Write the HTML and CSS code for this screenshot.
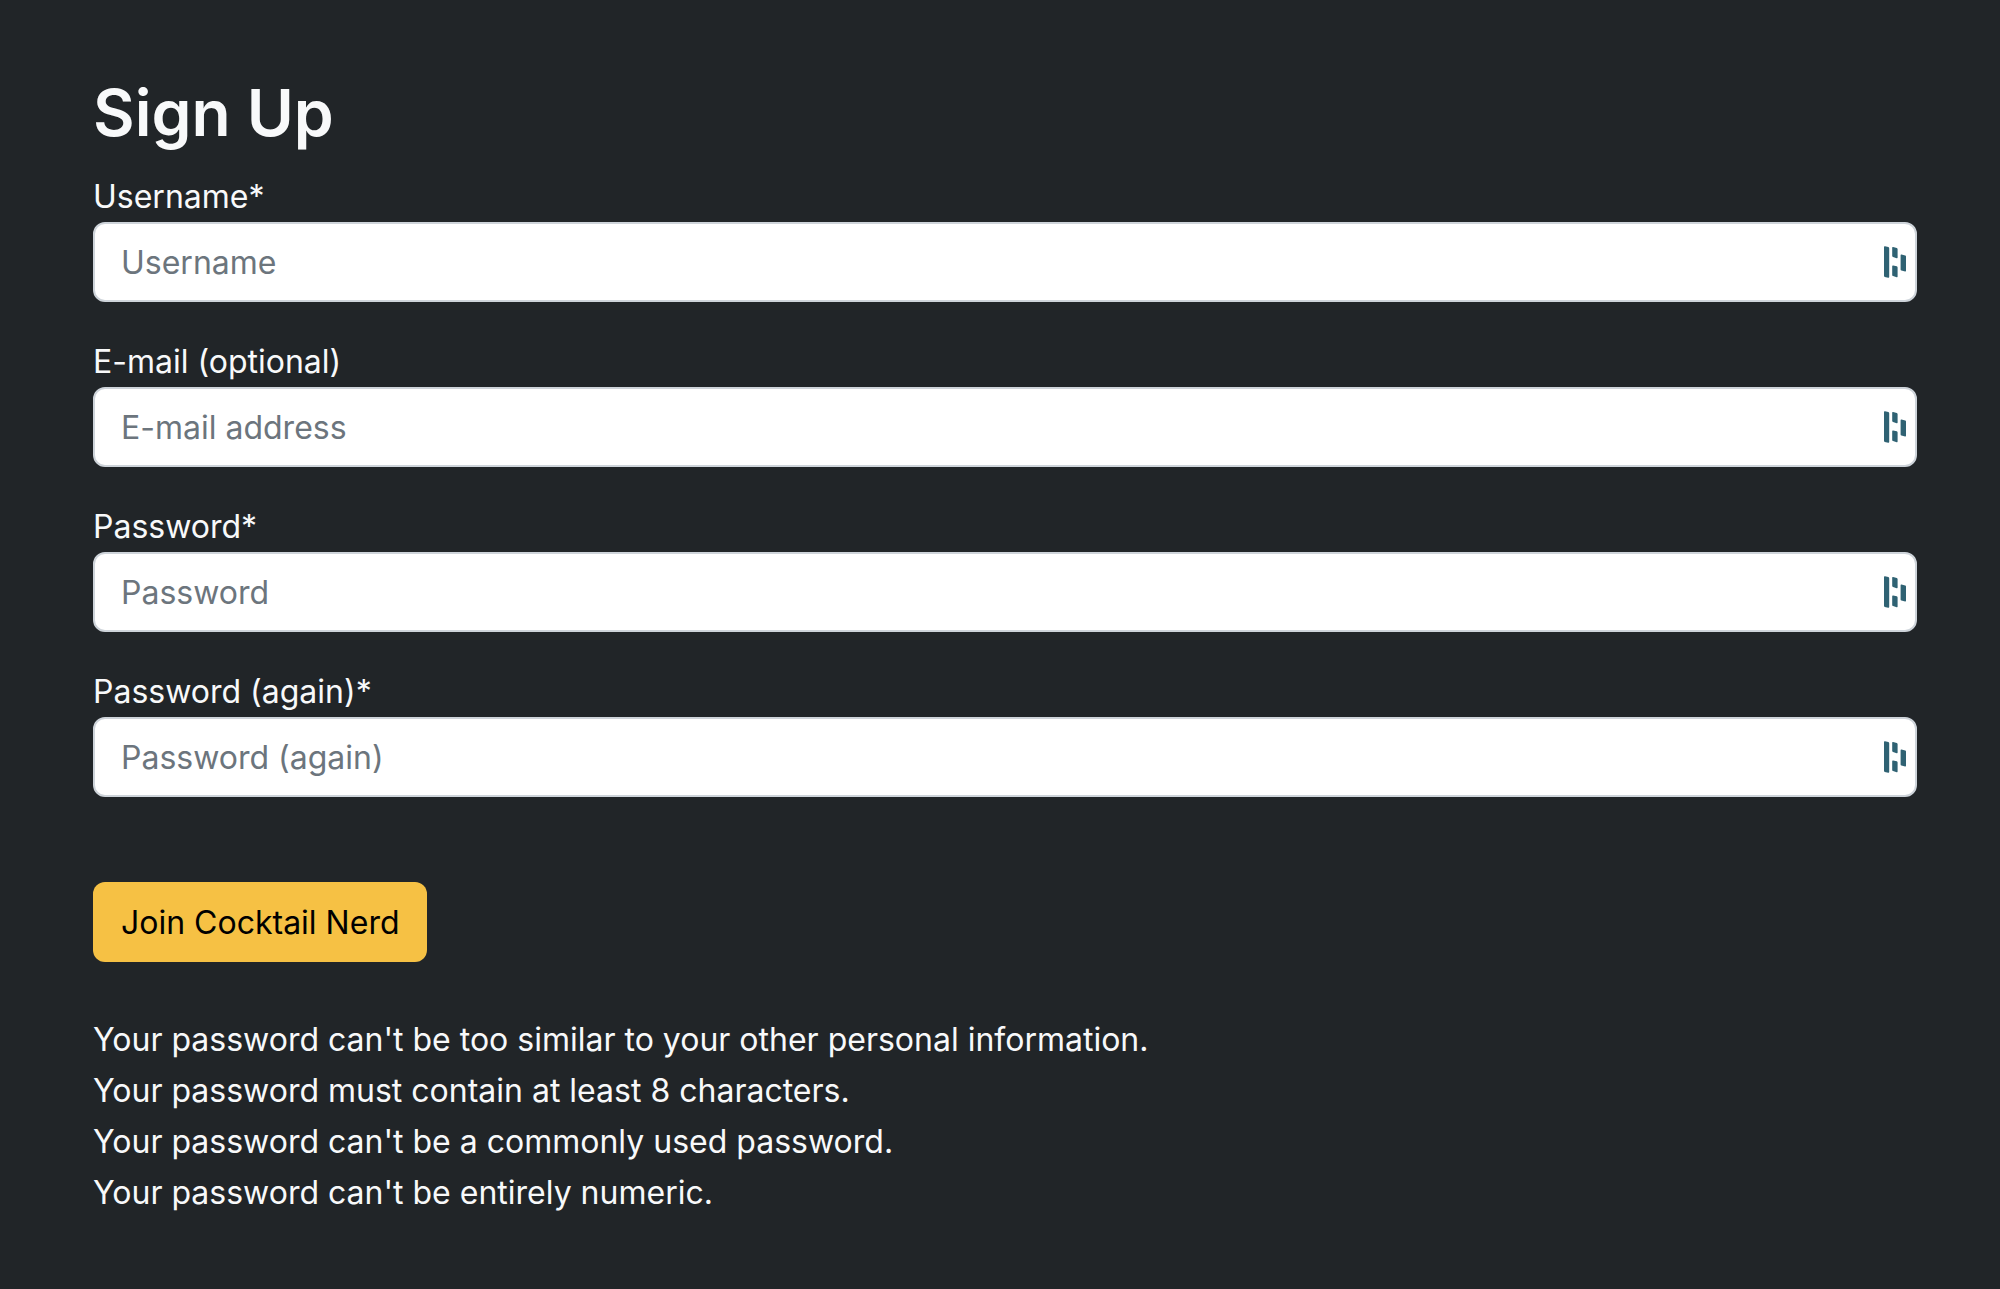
FILE: index.html
```html
<!DOCTYPE html>
<html lang="en">
<head>
<meta charset="utf-8">
<meta name="viewport" content="width=device-width, initial-scale=1">
<title>Sign Up</title>
<link rel="stylesheet" href="styles.css">
</head>
<body>
<svg class="sprite" aria-hidden="true">
  <symbol id="manager" viewBox="0 0 24 32">
    <path d="M1 .9 Q1 .1 2 .3 L5.3 1.1 Q6.2 1.3 6.2 2.2 V30.9 Q6.2 31.9 5.2 31.7 L1.8 30.9 Q1 30.7 1 29.8Z"/>
    <path d="M9.2 1.7 Q9.2 .9 10.1 1.1 L13.8 2 Q14.6 2.3 14.6 3.1 V11.5 Q14.6 12.5 13.7 12.2 L10 10.9 Q9.2 10.6 9.2 9.8Z"/>
    <path d="M9.2 20.2 Q9.2 19.3 10.1 19.5 L13.8 20.3 Q14.6 20.5 14.6 21.4 V30.6 Q14.6 31.5 13.7 31.2 L10 30.1 Q9.2 29.8 9.2 29Z"/>
    <path d="M17.6 9.2 Q17.6 8.3 18.5 8.5 L22.2 9.5 Q23 9.7 23 10.6 V24.7 Q23 25.7 22.1 25.5 L18.4 24.6 Q17.6 24.4 17.6 23.5Z"/>
  </symbol>
</svg>
<main class="page">
  <h1 class="title">Sign Up</h1>
  <form class="form">
    <div class="field">
      <label for="username">Username*</label>
      <div class="control">
        <input class="input" id="username" type="text" placeholder="Username" required>
        <svg class="icon" aria-hidden="true"><use href="#manager"/></svg>
      </div>
    </div>
    <div class="field">
      <label for="email">E-mail (optional)</label>
      <div class="control">
        <input class="input" id="email" type="email" placeholder="E-mail address">
        <svg class="icon" aria-hidden="true"><use href="#manager"/></svg>
      </div>
    </div>
    <div class="field">
      <label for="password">Password*</label>
      <div class="control">
        <input class="input" id="password" type="password" placeholder="Password" required>
        <svg class="icon" aria-hidden="true"><use href="#manager"/></svg>
      </div>
    </div>
    <div class="field">
      <label for="password2">Password (again)*</label>
      <div class="control">
        <input class="input" id="password2" type="password" placeholder="Password (again)" required>
        <svg class="icon" aria-hidden="true"><use href="#manager"/></svg>
      </div>
    </div>
    <button class="button" type="submit">Join Cocktail Nerd</button>
  </form>
  <ul class="rules">
    <li>Your password can't be too similar to your other personal information.</li>
    <li>Your password must contain at least 8 characters.</li>
    <li>Your password can't be a commonly used password.</li>
    <li>Your password can't be entirely numeric.</li>
  </ul>
</main>
</body>
</html>
```
FILE: styles.css
```css
* {
  box-sizing: border-box;
}

body {
  margin: 0;
  background: #212528;
  color: #f8f9fa;
  font-family: Inter, "Liberation Sans", sans-serif;
  font-size: 32px;
  line-height: 51px;
}

.sprite {
  display: none;
}

.page {
  padding: 72px 83px 72px 93px;
}

.title {
  margin: 0 0 17px;
  font-size: 64px;
  font-weight: 600;
  line-height: 82px;
}

.form {
  display: flex;
  flex-direction: column;
  align-items: flex-start;
  gap: 34px;
}

.field {
  display: flex;
  flex-direction: column;
  width: 100%;
}

.control {
  position: relative;
}

.input {
  display: block;
  width: 100%;
  height: 80px;
  padding: 0 72px 0 26px;
  border: 2px solid #ced4da;
  border-radius: 12px;
  background: #fff;
  color: #212529;
  font: inherit;
}

.input::placeholder {
  color: #6c757d;
  opacity: 1;
}

.icon {
  position: absolute;
  top: 24px;
  right: 10px;
  width: 24px;
  height: 32px;
  fill: #2f6273;
}

.button {
  height: 80px;
  margin-top: 51px;
  padding: 0 28px;
  border: 0;
  border-radius: 12px;
  background: #f6c144;
  color: #000;
  font: inherit;
}

.rules {
  margin: 52px 0 0;
  padding: 0;
  list-style: none;
}
```
